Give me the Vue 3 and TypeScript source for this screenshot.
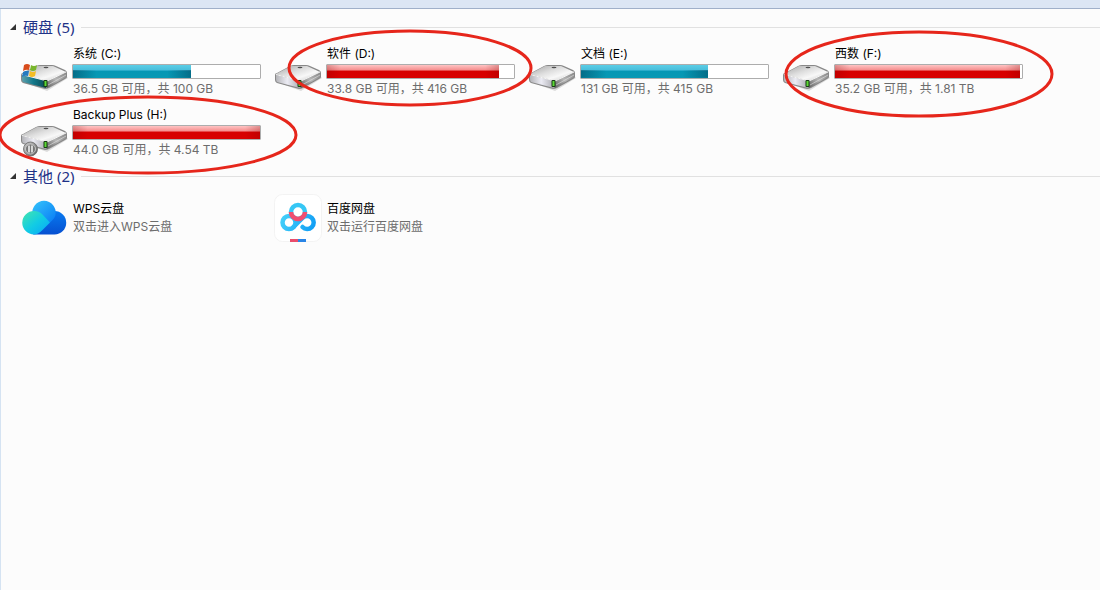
<script setup lang="ts">
import { ref } from 'vue'

interface Mark { cx: number; cy: number; rx: number; ry: number }
interface Drive {
  id: string
  name: string
  detail: string
  used: number
  full: boolean
  badge?: 'system' | 'paused'
  mark?: Mark
}

const drives: Drive[] = [
  { id: 'c', name: '系统 (C:)', detail: '36.5 GB 可用，共 100 GB', used: 63, full: false, badge: 'system' },
  { id: 'd', name: '软件 (D:)', detail: '33.8 GB 可用，共 416 GB', used: 92, full: true, mark: { cx: 136, cy: 22, rx: 121, ry: 37 } },
  { id: 'e', name: '文档 (E:)', detail: '131 GB 可用，共 415 GB', used: 68, full: false },
  { id: 'f', name: '西数 (F:)', detail: '35.2 GB 可用，共 1.81 TB', used: 99, full: true, mark: { cx: 137, cy: 28, rx: 133, ry: 42 } },
  { id: 'h', name: 'Backup Plus (H:)', detail: '44.0 GB 可用，共 4.54 TB', used: 100, full: true, badge: 'paused', mark: { cx: 128, cy: 28, rx: 148, ry: 38 } },
]

const others = [
  { id: 'wps', name: 'WPS云盘', detail: '双击进入WPS云盘' },
  { id: 'baidu', name: '百度网盘', detail: '双击运行百度网盘' },
]

const drivesOpen = ref(true)
const othersOpen = ref(true)
</script>

<template>
  <div class="window">
    <div class="strip"></div>
    <main class="content">
      <section>
        <h2 class="heading">
          <button class="toggle" type="button" :aria-expanded="drivesOpen" @click="drivesOpen = !drivesOpen">
            <svg class="arrow" viewBox="0 0 6 6" aria-hidden="true"><path d="M6 0V6H0Z" /></svg>
            <span>硬盘 (5)</span>
          </button>
        </h2>
        <div v-if="drivesOpen" class="grid drives">
          <article v-for="d in drives" :key="d.id" class="tile">
            <svg class="drive-icon" viewBox="0 0 48 36" aria-hidden="true">
              <defs>
                <linearGradient :id="'top-' + d.id" x1="0" y1="0" x2="1" y2="1">
                  <stop offset="0" stop-color="#a4a4a4" />
                  <stop offset="0.4" stop-color="#dedede" />
                  <stop offset="0.65" stop-color="#f8f8f8" />
                  <stop offset="1" stop-color="#bcbcbc" />
                </linearGradient>
                <linearGradient :id="'side-' + d.id" x1="0" y1="1" x2="1" y2="0">
                  <stop offset="0" stop-color="#5c5c5c" />
                  <stop offset="0.5" stop-color="#b6b6b6" />
                  <stop offset="1" stop-color="#848484" />
                </linearGradient>
                <linearGradient :id="'front-' + d.id" x1="0" y1="0" x2="1" y2="0">
                  <stop offset="0" :stop-color="d.badge === 'system' ? '#5fa0ad' : '#b4b4b8'" />
                  <stop offset="0.45" :stop-color="d.badge === 'system' ? '#13798b' : '#ececf4'" />
                  <stop offset="1" :stop-color="d.badge === 'system' ? '#0b4650' : '#a6a6ac'" />
                </linearGradient>
                <linearGradient :id="'badge-' + d.id" x1="0" y1="0" x2="1" y2="1">
                  <stop offset="0" stop-color="#d0d0d0" />
                  <stop offset="1" stop-color="#555555" />
                </linearGradient>
              </defs>
              <path d="M3 20 27 29 48 16 44 12Z" fill="#000" opacity=".13" />
              <path d="M1 13Q1 11 3 11L16 4Q18 3 20 3L32 3Q34 3 36 4L45 8Q47 9 47 11V15Q47 16 45 17L29 26Q27 27 25 27L3 21Q1 20 1 18Z" fill="#888" />
              <path d="M2 12 17 4 33 4 46 10 27 19Z" :fill="'url(#top-' + d.id + ')'" />
              <path d="M27 19 46 10V15L27 26Z" :fill="'url(#side-' + d.id + ')'" />
              <path d="M2 13 27 19 26 26 3 20Q2 19 2 17Z" :fill="'url(#front-' + d.id + ')'" />
              <path d="M2 12.500 27 19 46 10" fill="none" stroke="#f5f5f5" stroke-width="1" />
              <path d="M28 23 46 13" stroke="#eeeeee" stroke-width=".8" opacity=".65" />
              <ellipse cx="26" cy="5.500" rx="2.500" ry=".8" fill="#4e4e4e" />
              <rect x="23.500" y="18" width="4" height="7" rx="1" fill="#173b14" />
              <rect x="24.500" y="19" width="2" height="5" fill="#5cd935" />
              <g v-if="d.badge === 'system'">
                <path d="M4 3Q7 1 10 3L9 8Q6 7 3 9Z" fill="#d84c1c" />
                <path d="M11 3Q14 5 17 3L16 8Q13 10 10 8Z" fill="#78b52c" />
                <path d="M3 10Q6 8 9 9L8 14Q5 13 2 15Z" fill="#267ac0" />
                <path d="M10 9Q13 11 16 9L15 14Q12 16 9 14Z" fill="#f4bd24" />
              </g>
              <g v-if="d.badge === 'paused'">
                <circle cx="10.500" cy="26" r="7" :fill="'url(#badge-' + d.id + ')'" stroke="#666" stroke-width=".8" />
                <circle cx="10.500" cy="26" r="5" fill="#777" stroke="#d5d5d5" stroke-width=".8" />
                <path d="M9 22.500V29.500M12 22.500V29.500" stroke="#fff" stroke-width="1.400" />
              </g>
            </svg>
            <div class="info">
              <div class="name">{{ d.name }}</div>
              <div class="bar" role="meter" :aria-label="d.name" aria-valuemin="0" aria-valuemax="100" :aria-valuenow="d.used">
                <div class="fill" :class="{ full: d.full }" :style="{ width: d.used + '%' }"></div>
              </div>
              <div class="detail">{{ d.detail }}</div>
            </div>
            <svg v-if="d.mark" class="mark" aria-hidden="true">
              <ellipse :cx="d.mark.cx" :cy="d.mark.cy" :rx="d.mark.rx" :ry="d.mark.ry" />
            </svg>
          </article>
        </div>
      </section>

      <section>
        <h2 class="heading">
          <button class="toggle" type="button" :aria-expanded="othersOpen" @click="othersOpen = !othersOpen">
            <svg class="arrow" viewBox="0 0 6 6" aria-hidden="true"><path d="M6 0V6H0Z" /></svg>
            <span>其他 (2)</span>
          </button>
        </h2>
        <div v-if="othersOpen" class="grid others">
          <article v-for="o in others" :key="o.id" class="tile">
            <svg v-if="o.id === 'wps'" class="app-icon" viewBox="0 0 48 48" aria-hidden="true">
              <defs>
                <linearGradient id="cloud-top" x1="0" y1="0" x2="1" y2="1">
                  <stop offset="0" stop-color="#35c5fb" /><stop offset="1" stop-color="#087bf5" />
                </linearGradient>
                <linearGradient id="cloud-right" x1="0" y1="0" x2="0" y2="1">
                  <stop offset="0" stop-color="#087af0" /><stop offset="1" stop-color="#0650d1" />
                </linearGradient>
                <linearGradient id="cloud-left" x1="0" y1="0" x2="1" y2="1">
                  <stop offset="0" stop-color="#45e5ac" /><stop offset=".5" stop-color="#12cce4" /><stop offset="1" stop-color="#08a5fa" />
                </linearGradient>
              </defs>
              <path d="M34.500 17A11.750 11.750 0 0 1 34.500 40.500H13L29 20Z" fill="url(#cloud-right)" />
              <path d="M12.500 21A11.750 11.750 0 1 1 35.500 21Q35 24 30 28.500L22 23Z" fill="url(#cloud-top)" />
              <path d="M14 17Q19 17 22 20L30 28.500 22 36.500Q18 40.500 14 40.500A11.750 11.750 0 0 1 14 17Z" fill="url(#cloud-left)" />
            </svg>
            <svg v-else class="app-icon" viewBox="0 0 48 48" aria-hidden="true">
              <defs>
                <linearGradient id="loops" gradientUnits="userSpaceOnUse" x1="6" y1="20" x2="42" y2="36">
                  <stop offset="0" stop-color="#48d4fa" /><stop offset="1" stop-color="#0d9af4" />
                </linearGradient>
              </defs>
              <rect x=".5" y=".5" width="47" height="47" rx="8" fill="#fff" stroke="#f3f3f3" />
              <g fill="none" stroke-width="4.500" stroke-linecap="round">
                <circle cx="24" cy="18" r="7" stroke="#36c7f5" />
                <circle cx="15" cy="28.500" r="6.500" stroke="url(#loops)" />
                <path d="M19.500 33 28.500 24A6.500 6.500 0 1 1 28.500 33" stroke="url(#loops)" />
                <path d="M17 18A7 7 0 0 0 31 18" stroke="#f04e70" stroke-linecap="butt" />
              </g>
              <path d="M16 45H24V48H16Z" fill="#e94d6c" />
              <path d="M24 45H32V48H24Z" fill="#2985e6" />
            </svg>
            <div class="info">
              <div class="name">{{ o.name }}</div>
              <div class="detail">{{ o.detail }}</div>
            </div>
          </article>
        </div>
      </section>
    </main>
  </div>
</template>

<style>
html, body { background: #fcfcfc; }
</style>

<style scoped>
.window {
  display: flex;
  flex-direction: column;
  min-height: 100vh;
  overflow: hidden;
  background: #fcfcfc;
  font: 12px/16px Inter, "Noto Sans CJK SC", sans-serif;
  color: #000;
}
.strip { height: 8px; background: #dce6f4; border-bottom: 1px solid #a0b0c9; }
.content { flex: 1; padding: 8px 0 0; border-left: 1px solid #d5e3f2; }
.heading { display: flex; align-items: center; gap: 7px; margin: 0; padding-left: 9px; height: 20px; font-weight: 400; }
.heading::after { content: ""; flex: 1; height: 1px; background: #e1e1e1; }
.toggle { display: flex; align-items: center; gap: 7px; padding: 0; border: 0; background: none; color: #1e3287; font: 15px/20px "Noto Sans", "Noto Sans CJK SC", sans-serif; }
.arrow { width: 6px; height: 6px; fill: #333; }
.grid { display: grid; grid-template-columns: repeat(auto-fill, 240px); column-gap: 14px; row-gap: 9px; padding-left: 19px; }
.drives { padding-top: 9px; padding-bottom: 7px; }
.others { padding-top: 8px; }
.tile { position: relative; display: flex; gap: 4px; }
.drive-icon { flex: none; width: 48px; height: 36px; margin-top: 16px; }
.app-icon { flex: none; width: 48px; height: 48px; }
.info { flex: 1; white-space: nowrap; }
.name, .detail { padding-left: 1px; }
.detail { color: #6d6d6d; }
.bar { height: 15px; margin: 2px -1px 2px 0; box-sizing: border-box; border: 1px solid #adadad; border-radius: 1px; background: #fff; }
.fill {
  height: 100%;
  background: linear-gradient(90deg, rgba(0, 45, 70, .4), transparent 20%, transparent 80%, rgba(0, 45, 70, .4)) 0 100% / 100% 60% no-repeat,
    linear-gradient(#5ccde6, #48bedb 40%, #0697b4 45%, #0899b4);
}
.fill.full {
  background: linear-gradient(90deg, rgba(130, 0, 0, .25), transparent 8%, transparent 92%, rgba(130, 0, 0, .25)),
    linear-gradient(#ffc4c4, #f58c8c 40%, #d60000 45%, #d90000);
}
.others .info { padding-top: 6px; line-height: 18px; }
.mark { position: absolute; z-index: 2; top: 0; left: 0; width: 240px; height: 51px; overflow: visible; pointer-events: none; }
.mark ellipse { fill: none; stroke: #e6261b; stroke-width: 3px; }
</style>
